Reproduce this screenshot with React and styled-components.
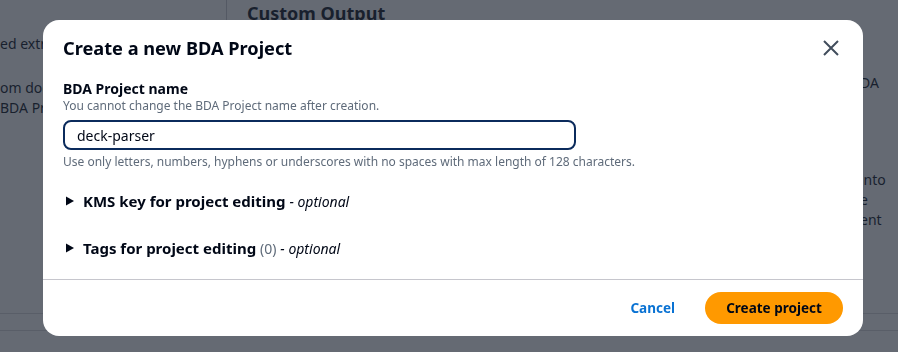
import React from "react";
import styled, { createGlobalStyle } from "styled-components";

const GlobalStyle = createGlobalStyle`
  html, body {
    margin: 0;
    padding: 0;
    background: #ffffff;
  }
  body {
    font-family: "Noto Sans", "Open Sans", Arial, sans-serif;
    color: #000716;
    overflow: hidden;
  }
`;

// background page (under the dimmed overlay)

const Page = styled.div`
  width: 898px;
  height: 352px;
  overflow: hidden;
  display: flex;
  flex-direction: column;
`;

const PageTop = styled.div`
  display: flex;
  height: 313px;
`;

const LeftPane = styled.div`
  width: 227px;
  border-right: 1px solid #c6c6cd;
  padding-top: 34px;
  box-sizing: border-box;
  font-size: 14px;
  line-height: 20px;
`;

// only the part left of the modal is ever visible
const ClipBox = styled.div`
  width: ${({ w }) => w}px;
  overflow: hidden;
  white-space: nowrap;
`;

const PaneLine = styled.div`
  margin-top: ${({ gap }) => gap || 0}px;
`;

const MainPane = styled.div`
  width: 633px;
  padding-left: 20px;
  box-sizing: border-box;
`;

const PageHeading = styled.h2`
  margin: 0;
  font-size: 18px;
  line-height: 26px;
  font-weight: 700;
`;

const RightPane = styled.div`
  flex: 1;
  padding-top: 35px;
  font-size: 14px;
  line-height: 20px;
  white-space: nowrap;
  overflow: hidden;
`;

const PageFooter = styled.div`
  height: 16px;
  border-top: 1px solid #d5d7db;
  border-bottom: 1px solid #d5d7db;
`;

// modal

const Overlay = styled.div`
  position: fixed;
  inset: 0;
  background: rgba(35, 43, 55, 0.7);
  display: flex;
  align-items: flex-start;
  padding: 20px 0 0 43px;
`;

const Modal = styled.div`
  width: 820px;
  background: #ffffff;
  border-radius: 16px;
  overflow: hidden;
`;

const Header = styled.div`
  display: flex;
  align-items: center;
  justify-content: space-between;
  padding: 16px 20px 0 20px;
`;

const Title = styled.h1`
  margin: 0;
  font-size: 18.2px;
  line-height: 22px;
  font-weight: 700;
  color: #000716;
`;

const CloseButton = styled.button`
  width: 24px;
  height: 24px;
  padding: 0;
  border: none;
  background: none;
  display: flex;
  align-items: center;
  justify-content: center;
  color: #414d5c;
  cursor: pointer;
`;

const Body = styled.div`
  padding: 20px 20px 20px 20px;
`;

const Label = styled.div`
  font-size: 14px;
  line-height: 18px;
  font-weight: 700;
`;

const Hint = styled.div`
  font-size: 12px;
  line-height: 16px;
  color: #5f6b7a;
  margin-top: ${({ gap }) => gap || 0}px;
`;

const Input = styled.input`
  display: block;
  width: 513px;
  height: 30px;
  box-sizing: border-box;
  margin-top: 6px;
  padding: 0 12px;
  border: 2px solid #0b2b5c;
  border-radius: 8px;
  font-family: inherit;
  font-size: 14px;
  color: #000716;
  outline: none;
`;

const Expander = styled.div`
  display: flex;
  align-items: center;
  gap: 8px;
  height: 22px;
  margin-top: ${({ gap }) => gap}px;
  padding-left: 3px;
  font-size: 15px;
  line-height: 22px;
`;

const ExpanderTitle = styled.span`
  font-weight: 700;
`;

const Counter = styled.span`
  color: #5f6b7a;
  font-weight: 400;
  font-size: 14px;
`;

const Optional = styled.span`
  font-style: italic;
  font-size: 14px;
`;

const Footer = styled.div`
  border-top: 1px solid #c6c6cd;
  padding: 12px 20px;
  display: flex;
  justify-content: flex-end;
  align-items: center;
  gap: 30px;
`;

const LinkButton = styled.button`
  border: none;
  background: none;
  padding: 0;
  font-family: inherit;
  font-size: 13.5px;
  font-weight: 700;
  color: #0972d3;
  cursor: pointer;
`;

const PrimaryButton = styled.button`
  height: 32px;
  width: 138px;
  border: none;
  border-radius: 20px;
  background: #ff9900;
  font-family: inherit;
  font-size: 13.5px;
  font-weight: 700;
  color: #000716;
  cursor: pointer;
`;

const Caret = () => (
  <svg width="9" height="10" viewBox="0 0 9 10">
    <polygon points="0,0.5 8,5 0,9.5" fill="#000716" />
  </svg>
);

export default function App() {
  return (
    <>
      <GlobalStyle />
      <Page>
        <PageTop>
          <LeftPane>
            <ClipBox w={43}>
              <PaneLine>ed extraction</PaneLine>
              <PaneLine gap={24}>om documents</PaneLine>
              <PaneLine>BDA Project</PaneLine>
            </ClipBox>
          </LeftPane>
          <MainPane>
            <PageHeading>Custom Output</PageHeading>
          </MainPane>
          <RightPane>
            <PaneLine>l</PaneLine>
            <PaneLine gap={18}>DA</PaneLine>
            <PaneLine gap={77}>into</PaneLine>
            <PaneLine>e</PaneLine>
            <PaneLine>ent</PaneLine>
          </RightPane>
        </PageTop>
        <PageFooter />
      </Page>

      <Overlay>
        <Modal role="dialog">
          <Header>
            <Title>Create a new BDA Project</Title>
            <CloseButton aria-label="Close">
              <svg width="16" height="16" viewBox="0 0 16 16">
                <path d="M1 1 L15 15 M15 1 L1 15" stroke="currentColor" strokeWidth="2" fill="none" />
              </svg>
            </CloseButton>
          </Header>
          <Body>
            <Label>BDA Project name</Label>
            <Hint>You cannot change the BDA Project name after creation.</Hint>
            <Input defaultValue="deck-parser" />
            <Hint gap={4}>
              Use only letters, numbers, hyphens or underscores with no spaces with max length of 128 characters.
            </Hint>
            <Expander gap={20}>
              <Caret />
              <span>
                <ExpanderTitle>KMS key for project editing</ExpanderTitle> <Optional>- optional</Optional>
              </span>
            </Expander>
            <Expander gap={25}>
              <Caret />
              <span>
                <ExpanderTitle>Tags for project editing</ExpanderTitle> <Counter>(0)</Counter>{" "}
                <Optional>- optional</Optional>
              </span>
            </Expander>
          </Body>
          <Footer>
            <LinkButton>Cancel</LinkButton>
            <PrimaryButton>Create project</PrimaryButton>
          </Footer>
        </Modal>
      </Overlay>
    </>
  );
}
